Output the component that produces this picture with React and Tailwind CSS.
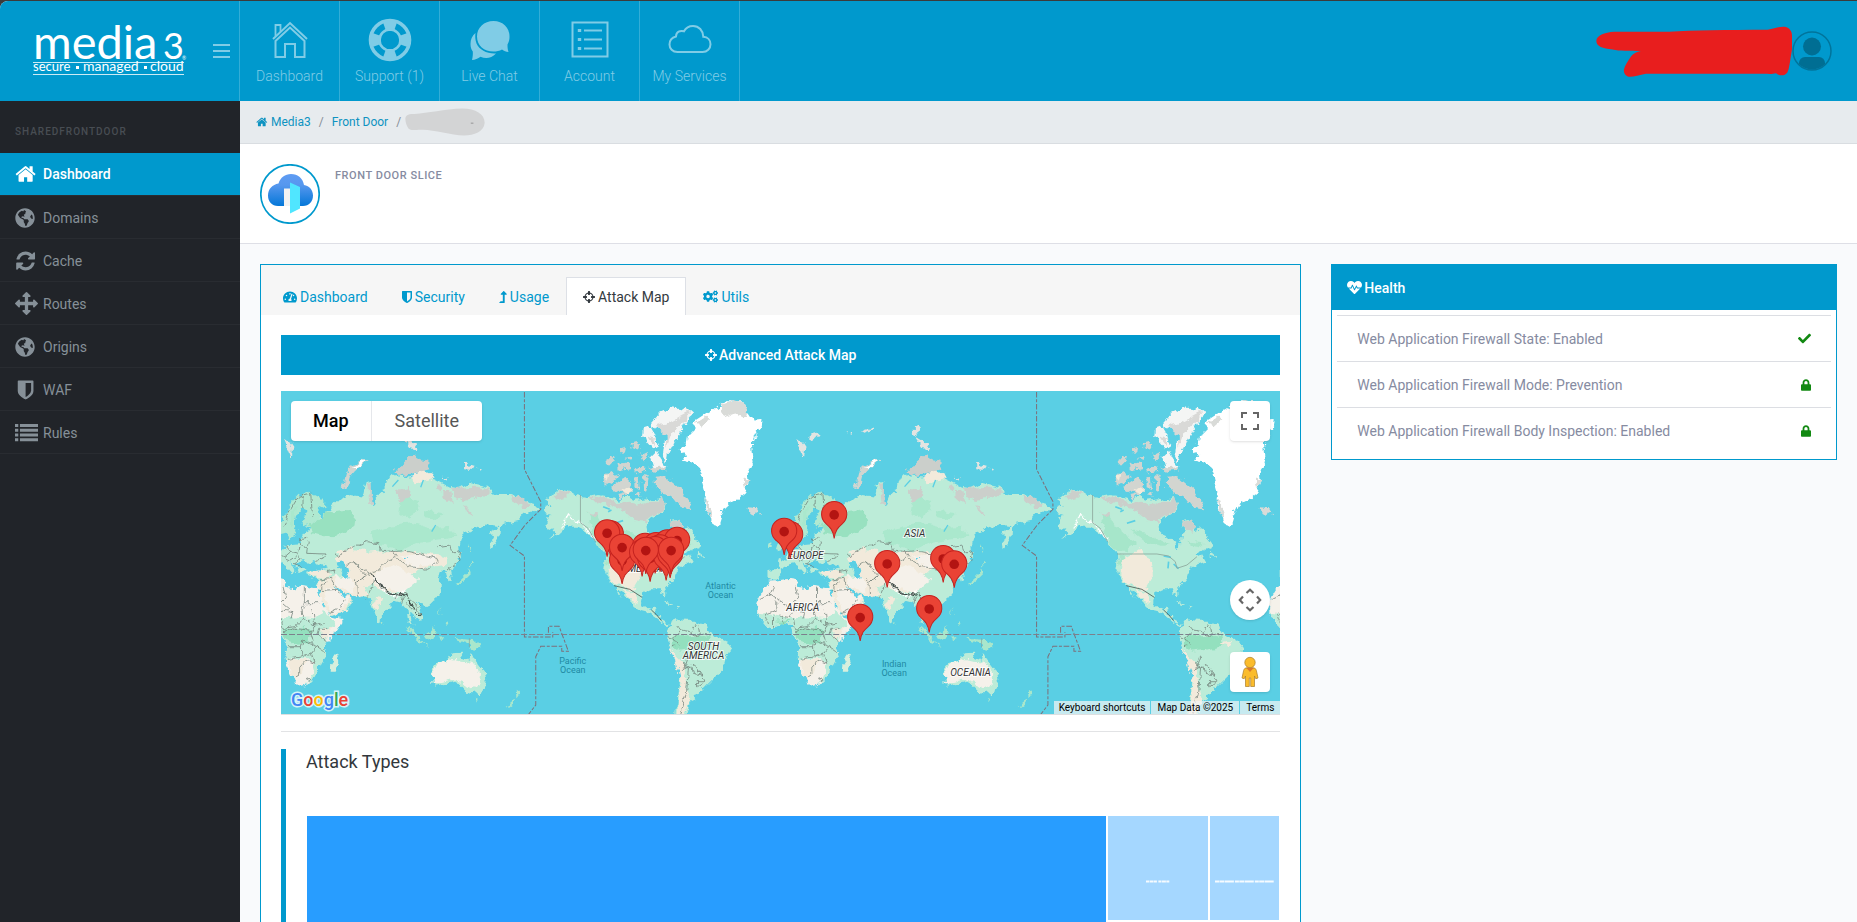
import React from "react";
import {
  FaTachometerAlt,
  FaCogs,
  FaHeartbeat,
  FaCheck,
  FaLock,
  FaLevelUpAlt,
  FaGlobeAmericas,
} from "react-icons/fa";

const GLYPHS = {
  home: "M1472 992v480q0 26-19 45t-45 19h-384v-384h-256v384h-384q-26 0-45-19t-19-45v-480q0-1 .5-3t.5-3l575-474 575 474q1 2 1 6zm223-69l-62 74q-8 9-21 11h-3q-13 0-21-7l-692-577-692 577q-12 8-24 7-13-2-21-11l-62-74q-8-10-7-23.5t11-21.5l719-599q32-26 76-26t76 26l244 204v-195q0-14 9-23t23-9h192q14 0 23 9t9 23v408l219 182q10 8 11 21.5t-7 23.5z",
  refresh:
    "M1639 1056q0 5-1 7-64 268-268 434.5t-478 166.5q-146 0-282.5-55t-243.5-157l-129 129q-19 19-45 19t-45-19-19-45v-448q0-26 19-45t45-19h448q26 0 45 19t19 45-19 45l-137 137q71 66 161 102t187 36q134 0 250-65t186-179q11-17 53-117 8-23 30-23h192q13 0 22.5 9.5t9.5 22.5zm25-800v448q0 26-19 45t-45 19h-448q-26 0-45-19t-19-45 19-45l138-138q-148-137-349-137-134 0-250 65t-186 179q-11 17-53 117-8 23-30 23h-199q-13 0-22.5-9.5t-9.5-22.5v-7q65-268 270-434.5t480-166.5q146 0 284 55.5t245 156.5l130-129q19-19 45-19t45 19 19 45z",
  arrows:
    "M1792 896q0 26-19 45l-256 256q-19 19-45 19t-45-19-19-45v-128h-384v384h128q26 0 45 19t19 45-19 45l-256 256q-19 19-45 19t-45-19l-256-256q-19-19-19-45t19-45 45-19h128v-384h-384v128q0 26-19 45t-45 19-45-19l-256-256q-19-19-19-45t19-45l256-256q19-19 45-19t45 19 19 45v128h384v-384h-128q-26 0-45-19t-19-45 19-45l256-256q19-19 45-19t45 19l256 256q19 19 19 45t-19 45-45 19h-128v384h384v-128q0-26 19-45t45-19 45 19l256 256q19 19 19 45z",
  shield:
    "M1344 960v-640h-448v1137q119-63 213-137 235-184 235-360zm192-768v768q0 86-33.5 170.5t-83 150-118 127.5-126.5 103-121 77.5-89.5 49.5-42.5 20q-12 6-26 6t-26-6q-16-7-42.5-20t-89.5-49.5-121-77.5-126.5-103-118-127.5-83-150-33.5-170.5v-768q0-26 19-45t45-19h1152q26 0 45 19t19 45z",
  list: "M0 240h256v224H0zM0 608h256v224H0zM0 976h256v224H0zM0 1344h256v224H0zM384 240h1408v224H384zM384 608h1408v224H384zM384 976h1408v224H384zM384 1344h1408v224H384z",
  crosshairs:
    "M1197 1024h-109q-26 0-45-19t-19-45v-128q0-26 19-45t45-19h109q-32-108-112.5-188.5t-188.5-112.5v109q0 26-19 45t-45 19h-128q-26 0-45-19t-19-45v-109q-108 32-188.5 112.5t-112.5 188.5h109q26 0 45 19t19 45v128q0 26-19 45t-45 19h-109q32 108 112.5 188.5t188.5 112.5v-109q0-26 19-45t45-19h128q26 0 45 19t19 45v109q108-32 188.5-112.5t112.5-188.5zm339-192v128q0 26-19 45t-45 19h-143q-37 161-154.5 278.5t-278.5 154.5v143q0 26-19 45t-45 19h-128q-26 0-45-19t-19-45v-143q-161-37-278.5-154.5t-154.5-278.5h-143q-26 0-45-19t-19-45v-128q0-26 19-45t45-19h143q37-161 154.5-278.5t278.5-154.5v-143q0-26 19-45t45-19h128q26 0 45 19t19 45v143q161 37 278.5 154.5t154.5 278.5h143q26 0 45 19t19 45z",
};

function Glyph({ name, className, box = "0 0 1792 1792" }) {
  return (
    <svg viewBox={box} className={className} fill="currentColor" aria-hidden="true">
      <path d={GLYPHS[name]} />
    </svg>
  );
}

/* ---------- header ---------- */

function Logo() {
  return (
    <svg viewBox="0 -14 156 80" className="h-20 w-39" aria-label="media3 secure managed cloud" role="img">
      <g fill="#fff" fontFamily="Lato, sans-serif">
        <text x="0" y="34" fontSize="47">media</text>
        <text x="130" y="34" fontSize="36">3</text>
        <text x="149" y="35" fontSize="5">®</text>
        <text x="0" y="46" fontSize="13">secure</text>
        <text x="50" y="46" fontSize="14">managed</text>
        <text x="117" y="46" fontSize="14">cloud</text>
        <rect x="43" y="41" width="3" height="3" />
        <rect x="111" y="41" width="3" height="3" />
      </g>
      <path d="M0 37.500H151M0 49.500H151" stroke="#fff" strokeOpacity=".8" />
    </svg>
  );
}

function HouseIcon() {
  return (
    <svg viewBox="0 0 44 44" className="size-11" fill="none" stroke="currentColor" strokeWidth="2">
      <path d="M5 21L22 5l17 16" />
      <path d="M7.500 23L22 9.500 36.500 23V39H27V26H17V39H7.500z" />
      <path d="M7.500 18V7h5v7" strokeWidth="1.800" />
    </svg>
  );
}

function RingIcon() {
  return (
    <svg viewBox="-22 -22 44 44" className="size-11" fill="none" stroke="currentColor">
      <circle r="10.500" strokeWidth="2.600" />
      <circle r="19.500" strokeWidth="3.600" />
      <g fill="currentColor" stroke="none">
        <path id="spoke" d="M-4-9L-7.500-19 0-21 7.500-19 4-9z" />
        <use href="#spoke" transform="rotate(90)" />
        <use href="#spoke" transform="rotate(180)" />
        <use href="#spoke" transform="rotate(270)" />
      </g>
    </svg>
  );
}

function ChatIcon() {
  return (
    <svg viewBox="0 0 44 44" className="size-11" fill="currentColor">
      <path d="M25.500 3C16 3 9 9.500 9 18.500S16 33.500 25.500 33.500c3 0 6-.6 8.500-2 2 1.500 4 2.500 6.500 2.500-1-3-1-5-1-7.500 1.500-2.500 2-5 2-8C41.500 9.500 35 3 25.500 3z" />
      <path d="M7.500 15C4 18 2.500 21.500 2.500 26c0 3 .8 5.500 2.300 7.500C5 36 4.800 39 4 42c3-.2 6-1.200 8.500-3.200 5.500 2.400 11 1.400 15.500-3.300-9 .5-16.500-3.500-19.500-10C7.200 22 7 18 7.500 15z" />
    </svg>
  );
}

function AccountIcon() {
  return (
    <svg viewBox="0 0 44 44" className="size-11" fill="none" stroke="currentColor">
      <rect x="4.500" y="4.500" width="35" height="34" strokeWidth="2" />
      <path d="M16 12.500h18M16 21.500h18M16 30.500h18" strokeWidth="2" />
      <path d="M11.500 11v3M11.500 20v3M11.500 29v3" strokeWidth="3.400" />
    </svg>
  );
}

function CloudIcon() {
  return (
    <svg viewBox="0 0 44 44" className="size-11" fill="none" stroke="currentColor" strokeWidth="2">
      <path d="M9.500 34C4.500 34 1.500 30.500 1.500 26.500c0-4 2.500-7 6.500-8 .2-4.500 4-6.500 8-5.200C18 9.500 21.300 8 25 8c6 0 10 4.500 10.300 10.700 4.500.3 7.200 3.600 7.200 7.500 0 4.500-3.300 7.800-8 7.800z" />
    </svg>
  );
}

const NAV = [
  ["Dashboard", HouseIcon],
  ["Support (1)", RingIcon],
  ["Live Chat", ChatIcon],
  ["Account", AccountIcon],
  ["My Services", CloudIcon],
];

function Header() {
  return (
    <header className="flex h-25 shrink-0 items-stretch bg-[#0099cd]">
      <div className="flex w-60 shrink-0 items-center justify-between border-r border-[#33add7] pr-[9px] pl-[33px]">
        <a href="#home"><Logo /></a>
        <button type="button" aria-label="Toggle menu" className="flex flex-col gap-1 text-[#80cce6]">
          <span className="block h-0.5 w-[17px] bg-current" />
          <span className="block h-0.5 w-[17px] bg-current" />
          <span className="block h-0.5 w-[17px] bg-current" />
        </button>
      </div>
      <nav className="flex">
        {NAV.map(([label, Icon]) => (
          <a
            key={label}
            href="#nav"
            className="flex w-25 flex-col items-center gap-1 border-r border-[#33add7] pt-[17px] text-sm font-light text-[#80cce6]"
          >
            <Icon />
            {label}
          </a>
        ))}
      </nav>
      <div className="ml-auto flex items-center pr-[25px]">
        <svg viewBox="110 76 588 152" className="h-[51px] w-49" aria-hidden="true">
          <path
            fill="#e81e1e"
            d="M111 120C112 104 135 95 165 93H330C400 88 500 88 625 87 645 82 660 77 675 78 690 80 698 90 698 105V145C692 180 690 205 684 215 675 227 660 225 650 217 640 220 630 219 615 219H260C240 222 225 228 212 228 198 227 192 215 194 205 197 193 205 182 215 167 224 156 232 153 245 151 210 150 180 151 160 146 130 143 111 138 111 120z"
          />
        </svg>
        <button type="button" aria-label="Profile">
          <svg viewBox="0 0 40 40" className="size-10">
            <defs>
              <clipPath id="face"><circle cx="20" cy="20" r="18.500" /></clipPath>
            </defs>
            <circle cx="20" cy="20" r="19" fill="none" stroke="#00749b" strokeWidth="1.500" />
            <g clipPath="url(#face)" fill="#006e93">
              <circle cx="20" cy="15.500" r="9" />
              <rect x="7" y="26" width="26" height="20" rx="6" />
            </g>
          </svg>
        </button>
      </div>
    </header>
  );
}

/* ---------- sidebar ---------- */

const MENU = [
  ["Dashboard", "home", "size-[22px]"],
  ["Domains", "globe", "size-5"],
  ["Cache", "refresh", "size-[22px]"],
  ["Routes", "arrows", "size-[23px]"],
  ["Origins", "globe", "size-5"],
  ["WAF", "shield", "size-[22px]"],
  ["Rules", "list", "size-[23px]"],
];

function Sidebar() {
  return (
    <aside className="w-60 shrink-0 bg-[#212429]">
      <h2 className="px-[15px] pt-[23px] pb-3.5 text-[10px] leading-[15px] font-medium tracking-widest text-[#484d53]">
        SHAREDFRONTDOOR
      </h2>
      <ul>
        {MENU.map(([label, icon, size], i) => (
          <li key={label}>
            <a
              href="#menu"
              className={
                i === 0
                  ? "flex h-[43px] items-center border-b border-[#292c31] bg-[#0099cd] pl-[15px] text-sm font-medium text-white"
                  : "flex h-[43px] items-center border-b border-[#292c31] pt-px pl-[15px] text-sm text-[#869098]"
              }
            >
              <span className="flex w-7 shrink-0">
                {icon === "globe" ? (
                  <FaGlobeAmericas className={size} />
                ) : (
                  <Glyph name={icon} className={size} box={icon === "arrows" || icon === "list" ? "0 0 1792 1792" : "128 0 1600 1792"} />
                )}
              </span>
              {label}
            </a>
          </li>
        ))}
      </ul>
    </aside>
  );
}

/* ---------- world map ---------- */
/* The three plates share one scale, 3 units to a pixel, each with its own origin. */

const OCEAN = "#5acfe4";

const AMERICA_LAND =
  "M470 385L490 380 484 370 470 360 490 345 515 328 545 335 560 345 600 352 630 345 660 350 690 362 710 350 740 360 770 355 800 362 820 350 830 375 825 395 800 410 785 420 775 440 780 462 810 475 828 485 832 505 842 500 843 480 845 465 848 445 845 425 865 420 880 435 885 450 905 445 920 470 937 492 930 505 905 512 890 520 905 528 915 545 895 553 880 560 868 570 862 590 850 605 835 622 830 635 835 648 828 650 815 628 790 628 765 640 762 665 772 685 785 690 795 680 805 682 798 698 815 705 818 720 835 730 845 733 838 738 820 728 800 712 780 698 755 692 735 680 722 660 705 640 690 622 690 632 703 658 690 642 680 618 665 605 655 590 648 570 652 545 650 525 640 505 625 490 610 465 590 450 570 440 550 440 535 435 520 452 500 470 485 478 505 460 498 452 480 445 472 430 478 415 490 405 475 400z M930 515L948 530 945 533 928 530z";
const SOUTH_AMERICA =
  "M330 740L345 718 375 722 410 722 440 738 448 762 480 775 512 790 510 810 492 840 488 870 465 890 440 915 415 940 405 955 385 965 380 990 375 1008 348 1008 350 980 358 920 362 870 355 845 335 820 318 785 320 760z";
const AMERICA_DEEP =
  "M600 400L625 405 645 440 680 465 712 485 690 500 670 515 650 515 630 490 610 455zM690 450L740 462 780 480 810 495 790 500 740 490zM865 485L910 490 895 502 868 498zM655 525L680 530 668 545 655 555z";
const AMERICA_SAND =
  "M665 540L700 520 715 508 735 530 755 545 758 590 735 630 700 620 672 608 660 585zM705 625L735 635 748 665 740 672 722 650z";
const AMERICA_TUNDRA =
  "M490 350L515 330 545 340 530 355 500 362zM600 355L650 350 680 370 720 365 750 375 775 365 805 365 822 350 830 378 815 400 790 410 770 425 740 420 715 400 690 385 640 370zM845 425L868 422 882 440 880 455 850 448zM600 395L630 400 620 415z";
const ARCTIC =
  "M645 290L670 278 690 285 675 305 650 320zM685 310L712 290 725 305 735 330 715 345 690 335 675 328zM742 292L752 290 755 330 742 325zM765 285L785 290 778 330 768 335zM800 290L830 288 850 305 880 330 905 370 912 392 880 385 850 345 820 338 800 315zM685 255L720 250 725 265 690 272zM660 235L680 230 675 250 655 250zM740 265L760 260 775 275 745 280zM780 260L830 258 835 272 800 275zM695 205L710 200 708 218 695 215zM730 190L745 185 755 205 738 210zM712 235L728 225 730 240zM755 225L775 215 780 230 765 240zM740 345L755 335 760 350zM690 345L715 340 700 355z";
const ARCTIC_WHITE =
  "M788 130L815 100 855 82 900 88 914 100 890 130 865 180 840 215 835 245 825 220 830 180 850 150 815 150 790 142zM770 145L785 140 800 165 810 195 795 208 775 185 768 165zM790 230L805 215 815 235 835 262 800 265z";
const ARCTIC_SHADE = "M800 140L850 125 905 95 895 120 850 160 835 200 832 165zM780 170L800 175 800 195z";
const GREENLAND =
  "M480 75L500 60 545 65 560 90 580 122 607 120 605 140 585 165 575 190 580 240 565 265 568 300 555 340 530 360 500 375 485 405 475 438 455 432 445 400 435 375 440 345 430 310 420 265 400 248 365 242 378 225 355 208 375 200 380 170 400 155 400 125 430 105 460 90z";
const GREENLAND_ROCK =
  "M485 72L520 60 548 68 565 95 560 115 530 100 505 110 480 95zM405 130L440 110 450 118 425 140zM435 350L445 370 455 425 442 395zM545 290L570 300 555 325z";

const RUSSIA =
  "M120 400L150 412 190 378 215 355 245 345 280 350 290 305 300 303 302 345 310 380 325 345 340 330 345 300 375 285 430 290 470 285 500 300 540 320 570 325 600 308 650 320 680 345 720 345 750 350 785 372 805 385 790 400 765 395 745 420 700 432 690 440 688 470 665 505 660 480 675 450 685 435 650 430 620 440 580 460 570 490 572 520 555 560 540 570 546 600 535 604 530 575 510 575 500 590 515 610 515 635 495 660 465 675 440 668 458 700 456 715 440 718 430 700 420 696 425 725 432 742 416 718 412 685 395 665 375 660 350 690 336 700 335 722 325 728 315 700 305 670 290 655 270 650 240 645 220 635 245 660 245 675 215 700 180 708 165 680 148 642 142 612 145 600 115 592 108 575 128 570 160 572 175 568 150 550 130 540 112 552 118 562 100 572 86 580 78 562 60 550 78 575 68 580 48 558 34 550 10 556 -10 568 -8 585 -24 600 -44 596 -44 570 -12 566 -12 545 8 532 30 518 44 505 66 492 90 490 98 468 118 455 125 440 112 440 108 420z";
const SCANDINAVIA =
  "M30 460L28 430 45 405 62 370 85 345 115 335 148 352 172 378 160 385 140 380 148 405 130 440 98 440 92 415 105 395 95 385 80 410 78 435 84 455 70 470 55 480 48 455zM-16 440L0 455 10 480 14 500 -14 508 -8 490 -18 465zM-42 488L-30 482 -28 500 -42 505z";
const DEEP_FOREST_PALE =
  "M300 460L360 440 420 430 480 445 540 440 560 470 500 480 440 490 400 510 350 500 310 490zM60 400L80 380 75 430 60 440zM400 345L450 365 435 400 420 420 390 400zM460 390L520 400 500 420 465 415z";
const DEEP_FOREST = "M120 440L170 395 220 390 255 400 250 440 215 465 170 470 130 460z";
const EURASIA_SAND =
  "M195 520L240 505 280 512 320 510 350 520 380 515 430 512 480 520 530 530 525 555 490 560 440 572 420 600 380 640 340 635 310 610 280 625 300 645 270 655 230 640 245 665 215 700 180 706 165 680 146 642 146 605 190 590 230 590 215 560 200 540zM115 575L150 568 185 580 170 596 120 592zM315 645L340 650 325 690 312 680zM420 290L460 270 500 290 480 300 440 310z";
const EURASIA_DESERT =
  "M385 530L440 515 500 530 495 555 430 560zM320 575L370 555 420 580 445 600 400 635 350 628 310 600zM165 630L200 625 240 660 210 695 180 700zM190 585L245 590 250 640 200 620z";
const EURASIA_TUNDRA =
  "M365 275L400 255 430 225 450 238 478 242 478 268 440 278 400 285zM290 310L302 305 302 345 312 372 300 375zM375 330L420 320 415 355 395 365zM545 325L620 320 660 330 640 350 580 360 550 350zM720 350L755 352 785 378 760 378 725 365zM520 330L540 330 545 370 520 350zM580 370L605 400 600 410zM500 310L520 320 510 335z";
const NOVAYA = "M230 320L218 325 228 285 245 255 282 236 288 242 255 270 238 290z";
const SVALBARD =
  "M42 178L60 185 70 200 65 235 55 210zM72 172L100 160 110 168 95 185 80 180zM195 158L215 150 208 158zM230 155L270 145 272 150 245 160z M395 140L410 145 405 165 395 160zM398 170L415 180 440 195 430 212 415 195zM585 250L612 258 605 270 585 268zM620 262L635 268 632 272zM520 290L532 292 530 302z";
const ISLANDS =
  "M598 490L605 525 606 500zM600 558L605 580 590 595 575 608 552 610 575 598 590 582zM600 545L612 550 600 558zM508 685L515 705 508 702zM528 722L534 738 524 735zM412 738L430 755 450 780 478 797 450 790 425 765zM462 765L485 752 498 738 492 765 482 782 465 775zM555 770L580 778 610 780 635 800 618 806 590 792 565 785zM505 770L520 768 512 780zM335 725L341 732 336 736z M740 932L753 942 742 958zM738 955L722 978 710 986 718 970zM614 955L628 956 621 968z";
const AUSTRALIA =
  "M482 870L500 850 530 840 545 820 575 818 580 835 600 842 605 818 615 840 645 880 650 905 635 935 600 940 580 920 555 905 520 915 490 920 490 895z";
const AUSTRALIA_SAND =
  "M486 872L510 850 540 838 570 845 610 848 630 880 628 915 605 925 580 910 550 898 510 908 492 912z";
const SEAS =
  "M72 555L95 540 130 555 118 568 85 562zM200 545L222 540 232 575 245 590 228 596 212 570zM95 385L110 392 92 420 98 440 118 432 95 450 84 462 78 438 82 410zM190 618L215 638 238 648 222 650 200 635zM400 540L412 535 408 530z";

const AFRICA =
  "M628 602L690 597 708 600 710 620 740 625 750 615 775 620 805 625 812 640 830 680 850 710 880 718 880 730 860 760 835 790 830 815 832 835 805 865 795 890 775 915 745 920 735 890 715 850 713 825 720 800 705 775 700 755 695 735 670 730 640 742 620 738 600 715 590 695 592 665 605 640 620 615z";
const AFRICA_GREEN =
  "M592 698L640 705 700 715 760 712 800 715 825 690 850 715 862 740 845 745 835 790 830 815 832 835 805 850 780 838 715 838 713 825 720 800 705 775 700 755 695 735 670 730 640 742 620 738 600 715z";
const AFRICA_DEEP = "M705 745L770 740 795 760 780 785 735 790 712 775zM645 725L690 722 670 735z";
const AFRICA_BORDERS =
  "M628 640L700 690M640 615L632 640 600 655M708 620L715 650 700 665 735 695M769 620L769 668 812 668M769 668L762 690 765 712M650 665L650 690 620 700M700 690L690 712 655 708M700 690L735 695 730 715M612 700L625 735M640 710L640 740M665 710L670 730M700 715L705 745 740 740 765 715 800 735 830 730M795 690L800 735 790 760 795 785M835 745L815 745 810 765 835 785M705 755L740 745 780 750 790 770M720 800L760 800 765 780 790 790M760 800L762 830 720 838M762 830L790 820 808 800M790 820L800 850 775 840 755 862 755 885 738 890M780 790L808 800 830 815M775 890L788 898 782 904z";
const SAMERICA_BORDERS =
  "M350 735L362 750 340 775 325 770M362 750L395 755 405 735M395 755L400 768 440 760M415 740L418 760M340 775L352 795 335 800M385 830L375 860 395 862 400 880 425 885 435 905 410 905M395 862L372 850M425 885L412 865 398 855M362 870L385 862 380 930 362 1003M412 905L412 920 435 905";
const EURASIA_BORDERS =
  "M45 440L55 400 78 362 100 345 122 340 128 410M100 345L98 390M112 475L90 480 92 495 112 500 115 485M112 500L110 520 165 522 160 535 135 545M50 500L62 515 45 530M62 515L85 520 90 500M35 530L60 540 85 525 90 540 70 550 95 560M195 520L200 530 250 500 290 485 325 492 330 510 370 515 380 530 350 545 320 575 295 580 250 545 235 550M370 515L400 512 440 520 500 535 505 545 470 568 420 560 380 535M505 500L540 495 545 520 572 515 565 545 530 570M235 550L225 560M250 545L290 590 260 605 250 595M310 590L330 620 350 635 380 645 372 660M380 645L405 640 412 650 430 665 445 680M400 650L395 670M412 670L425 690 440 690M440 680L452 705M310 600L305 620 290 655M260 605L262 645M260 605L300 585M150 600L185 595 195 620 215 640M165 605L150 632 200 628M180 700L210 685 225 660M170 575L195 570 190 580";
const AMERICA_BORDERS = "M577 345V428M577 428L600 445 622 485M650 522H770L805 528 825 545 830 565 860 555 890 530";

const DATELINE = "M763 0V268L812 365V388L765 435 720 496 763 528V771H848V756M835 758V739H867L895 814H875V799H812L797 830V975L770 1010";

function World({ shift }) {
  return (
    <g transform={`translate(${shift} -11)`}>
      <g transform="translate(107 0) scale(.33333)">
        <g filter="url(#coast)">
          <path d={AMERICA_LAND} fill="#bcecd8" />
          <path d={AMERICA_DEEP} fill="#a6e6ca" />
          <path d={AMERICA_SAND} fill="#f2eadb" />
          <path d={AMERICA_TUNDRA} fill="#cbcfcb" />
          <path d={ARCTIC} fill="#d2d5d0" />
          <path d={ARCTIC_WHITE} fill="#f4f5f4" />
          <path d={ARCTIC_SHADE} fill="#d9d9d7" />
          <path d="M718 318L735 330 715 342 700 332zM645 292L660 285 655 305z" fill="#f2eadb" />
          <path d="M825 664L850 672 855 678 835 672zM862 680L880 682 872 686z" fill="#bcecd8" />
        </g>
        <path
          d="M520 445L540 405 555 420 580 430 605 455 620 480"
          fill="none"
          stroke="#fff"
          strokeWidth="5"
          strokeDasharray="7 3 10 2"
          filter="url(#jitter)"
        />
        <path d="M645 380l20 8M680 430l25-8M660 395l10-5M805 545l-2 20M790 528l22 4M820 552l15 14" stroke={OCEAN} strokeWidth="5" fill="none" />
        <path d={AMERICA_BORDERS} fill="none" stroke="#8ca69b" strokeWidth="2.500" />
        <path d="M678 617L725 628 762 652M790 690l15 14 15 18" fill="none" stroke="#4b5752" strokeWidth="2.500" />
      </g>
      <g transform="translate(501 0) scale(.33333)">
        <g filter="url(#coast)">
          <path d={RUSSIA} fill="#bcecd8" />
          <path d={SCANDINAVIA} fill="#b0e9d1" />
          <path d={DEEP_FOREST_PALE} fill="#aae8cd" />
          <path d={DEEP_FOREST} fill="#98e1c0" />
          <path d={EURASIA_SAND} fill="#f2eadb" />
          <path d={EURASIA_DESERT} fill="#f5f1ea" />
          <path d={EURASIA_TUNDRA} fill="#cbcfcb" />
          <path d={NOVAYA} fill="#d2d5d0" />
          <path d="M245 262L282 238 286 242 258 264z" fill="#fff" />
          <path d={SVALBARD} fill="#e3e4e1" />
          <path d={ISLANDS} fill="#a9e7cc" />
          <path d={AUSTRALIA} fill="#bcecd8" />
          <path d={AUSTRALIA_SAND} fill="#f5f1ea" />
          <path d={SEAS} fill={OCEAN} />
        </g>
        <path d="M330 620L350 637 378 650 405 632" fill="none" stroke="#fff" strokeWidth="9" strokeDasharray="5 3" />
        <path d="M485 455l12-20M460 300l-8 22M385 300l-18 20" stroke={OCEAN} strokeWidth="4" />
        <path d={EURASIA_BORDERS} fill="none" stroke="#6f7d76" strokeWidth="2.200" filter="url(#jitter)" />
        <path d="M300 575l20 30 40 33 25 5M390 640l20 10 15 25M425 670l15 30 12 8" fill="none" stroke="#38433f" strokeWidth="3" filter="url(#jitter)" />
        <path d="M598 775v26" stroke="#8aa398" strokeWidth="2" />
      </g>
      <g transform="translate(279 0) scale(.33333)">
        <g filter="url(#coast)">
          <path d={AFRICA} fill="#f5f1ea" />
          <path d={AFRICA_GREEN} fill="#bcecd8" />
          <path d={AFRICA_DEEP} fill="#93e0be" />
          <path d="M720 840L775 840 760 885 735 890z" fill="#f2eadb" />
          <path d="M800 850L830 835 800 890 775 912 790 880z" fill="#bcecd8" />
          <path d="M820 745L850 745 835 780 820 770z" fill="#f2eadb" />
          <path d="M870 820L875 835 860 875 848 875 850 850z" fill="#d7efdd" />
          <path d={SOUTH_AMERICA} fill="#bcecd8" />
          <path d="M335 770L400 765 450 772 455 795 400 810 360 815 335 795z" fill="#93e0be" />
          <path d="M322 800L345 825 366 845 376 900 385 960 372 1005 352 1005 362 900 350 850zM440 790L480 785 470 800z" fill="#f2eadb" />
          <path d={GREENLAND} fill="#fff" />
          <path d={GREENLAND_ROCK} fill="#d9dbd8" />
          <path d="M565 385L595 388 600 400 580 410 568 402z" fill="#d9dbd8" />
        </g>
        <path d={AFRICA_BORDERS} fill="none" stroke="#6f7d76" strokeWidth="2.200" filter="url(#jitter)" />
        <path d={SAMERICA_BORDERS} fill="none" stroke="#6f7d76" strokeWidth="2.200" filter="url(#jitter)" />
      </g>
      <path d={DATELINE} transform="translate(-11 0) scale(.33333)" fill="none" stroke="#7d6f79" strokeWidth="3" strokeDasharray="17 5 9 5" />
    </g>
  );
}

const PINS = [
  [152, 533], [141, 530], [186, 612], [186, 573], [255, 570], [246, 589], [288, 568],
  [322, 560], [351, 552], [300, 575], [285, 580], [270, 605], [318, 601], [330, 594],
  [257, 582], [333, 582], [690, 535], [672, 525], [822, 475], [900, 783], [981, 622],
  [1149, 607], [1182, 623], [1107, 757],
];

const PLACES = [
  [246, 576, "AMERICA"], [1064, 470, "ASIA"], [736, 536, "EUROPE"], [728, 692, "AFRICA"],
  [430, 809, "SOUTH"], [430, 836, "AMERICA"], [1231, 887, "OCEANIA"],
];

const OCEANS = [
  [481, 627, "Atlantic"], [481, 653, "Ocean"], [38, 851, "Pacific"], [38, 878, "Ocean"],
  [1002, 860, "Indian"], [1002, 887, "Ocean"],
];

const at = (x, y) => [279 + x / 3, y / 3 - 11];

function WorldMap() {
  return (
    <svg viewBox="0 0 999 323" preserveAspectRatio="xMidYMid slice" className="block h-full w-full" fontFamily="Roboto, sans-serif">
      <defs>
        <filter id="coast" x="-5%" y="-5%" width="110%" height="110%">
          <feTurbulence type="fractalNoise" baseFrequency=".045" numOctaves="3" seed="4" result="n" />
          <feDisplacementMap in="SourceGraphic" in2="n" scale="26" xChannelSelector="R" yChannelSelector="G" />
        </filter>
        <filter id="jitter" x="-5%" y="-5%" width="110%" height="110%">
          <feTurbulence type="fractalNoise" baseFrequency=".06" numOctaves="2" seed="9" result="n" />
          <feDisplacementMap in="SourceGraphic" in2="n" scale="18" xChannelSelector="R" yChannelSelector="G" />
        </filter>
      </defs>
      <rect x="-600" width="2200" height="323" fill={OCEAN} />
      <World shift={-512} />
      <World shift={0} />
      <World shift={512} />
      <path d="M0 243.500H999" stroke="#7d7f8c" strokeDasharray="6 2" />
      <g fontSize="10" textAnchor="middle">
        {OCEANS.map(([x, y, t]) => (
          <text key={x + t} x={at(x, y)[0]} y={at(x, y)[1]} fontSize="9" fill="#1f8aa3">{t}</text>
        ))}
        {PLACES.map(([x, y, t]) => (
          <text key={x + t} x={at(x, y)[0]} y={at(x, y)[1]} fontStyle="italic" fill="#333" stroke="#fff" strokeWidth="2" strokeOpacity=".8" paintOrder="stroke">{t}</text>
        ))}
      </g>
      {PINS.map(([x, y]) => (
        <g key={`${x}-${y}`} transform={`translate(${at(x, y)[0]} ${at(x, y)[1]})`}>
          <path d="M0 0C-1-8-4-11-8-14.500A12.600 12.600 0 1 1 8-14.500C4-11 1-8 0 0z" fill="#ea4335" stroke="#c5221f" strokeWidth="1" />
          <circle cy="-23.400" r="4.800" fill="#b31412" />
        </g>
      ))}
      <text x="10" y="315" fontSize="18" fontWeight="500" stroke="#fff" strokeWidth="3" strokeOpacity=".75" paintOrder="stroke">
        <tspan fill="#4285f4">G</tspan>
        <tspan fill="#ea4335">o</tspan>
        <tspan fill="#fbbc04">o</tspan>
        <tspan fill="#4285f4">g</tspan>
        <tspan fill="#34a853">l</tspan>
        <tspan fill="#ea4335">e</tspan>
      </text>
    </svg>
  );
}

function MapPanel() {
  return (
    <div className="relative mt-4 h-[324px] overflow-hidden border-b border-[#dedfe0] bg-[#5acfe4]">
      <WorldMap />
      <div className="absolute top-[10px] left-[10px] flex h-10 rounded-sm bg-white text-lg shadow">
        <button type="button" className="border-r border-gray-200 px-[22px] font-medium text-black">Map</button>
        <button type="button" className="px-[23px] text-[#565656]">Satellite</button>
      </div>
      <div className="absolute inset-y-[10px] right-[10px] flex w-10 flex-col pb-3">
        <button type="button" aria-label="Full screen" className="flex size-10 items-center justify-center rounded-sm bg-white shadow">
          <svg viewBox="0 0 18 18" className="size-[18px]" fill="#666">
            <path d="M0 0v6h2V2h4V0zM16 0h-4v2h4v4h2V0zM16 16h-4v2h6v-6h-2zM2 12H0v6h6v-2H2z" />
          </svg>
        </button>
        <button type="button" aria-label="Map camera controls" className="mt-auto mb-8 flex size-10 items-center justify-center rounded-full bg-white shadow">
          <svg viewBox="0 0 24 24" className="size-6" fill="none" stroke="#666" strokeWidth="2.200">
            <path d="M8.500 5L12 1.800 15.500 5M8.500 19L12 22.200 15.500 19M5 8.500L1.800 12 5 15.500M19 8.500L22.200 12 19 15.500" />
          </svg>
        </button>
        <button type="button" aria-label="Street View" className="flex size-10 items-center justify-center rounded-sm bg-white shadow">
          <svg viewBox="0 0 20 32" className="h-8 w-5">
            <path d="M6 12h8c1.500 0 2.300 1.500 2.700 4l1.300 6-2.200.8L14.500 20V30.500H10.700V22H9.300v8.500H5.500V20l-1.300 2.800L2 22l1.300-6C3.700 13.500 4.500 12 6 12z" fill="#fbbc2c" stroke="#a77d2c" strokeWidth=".7" />
            <path d="M6 11.500h8L10 16z" fill="#d9782d" />
            <circle cx="10" cy="6.500" r="5.200" fill="#fbbc2c" stroke="#a77d2c" strokeWidth=".7" />
          </svg>
        </button>
      </div>
      <div className="absolute right-0 bottom-0 flex h-[13px] gap-px text-[10px] leading-[13px] text-black">
        <button type="button" className="bg-[#f5f5f5]/70 px-[5px]">Keyboard shortcuts</button>
        <span className="bg-[#f5f5f5]/70 px-[6px]">Map Data ©2025</span>
        <a href="#terms" className="bg-[#f5f5f5]/70 px-[6px]">Terms</a>
      </div>
    </div>
  );
}

/* ---------- content ---------- */

const TABS = [
  ["Dashboard", <FaTachometerAlt className="size-[14px]" />],
  ["Security", <Glyph name="shield" className="h-[14px] w-[10px]" box="256 0 1280 1792" />],
  ["Usage", <FaLevelUpAlt className="h-3 w-2" />],
  ["Attack Map", <Glyph name="crosshairs" className="h-[14px] w-3" box="0 128 1536 1536" />],
  ["Utils", <FaCogs className="size-[15px]" />],
];

function AttackCard() {
  return (
    <section className="border border-[#0099cd] bg-white">
      <div role="tablist" className="flex items-end bg-[#f6f6f6] px-[5px] pt-3 text-sm">
        {TABS.map(([label, icon]) => (
          <button
            type="button"
            role="tab"
            key={label}
            aria-selected={label === "Attack Map"}
            className={
              label === "Attack Map"
                ? "flex h-[38px] items-center gap-[3px] border border-b-0 border-[#dde0e6] bg-white px-4 text-[#343a40]"
                : "flex h-[38px] items-center gap-[3px] border border-b-0 border-transparent px-4 text-[#0099cd]"
            }
          >
            {icon}
            {label}
          </button>
        ))}
      </div>
      <div className="px-5 pt-5">
        <a href="#advanced" className="flex h-10 items-center justify-center gap-0.5 bg-[#0099cd] text-sm font-medium text-white">
          <Glyph name="crosshairs" className="size-3" box="0 128 1536 1536" />
          Advanced Attack Map
        </a>
        <MapPanel />
        <hr className="my-4 border-[#e2e3e5]" />
        <div className="mt-[17px] border-l-[5px] border-[#0099cd] pl-5">
          <h3 className="text-lg leading-[26px] text-[#32373c]">Attack Types</h3>
          <div className="mt-[41px] flex h-80 gap-0.5 px-px">
            <div className="flex-[800] bg-[#289dff]" />
            <div className="flex h-[104px] flex-[100] items-center justify-center bg-[#a5d7ff] pt-[26px]">
              <svg viewBox="0 0 24 3" className="h-[3px] w-6">
                <path d="M0 1.500H24" stroke="#fff" strokeWidth="2" strokeOpacity=".9" strokeDasharray="3 .5 4 .4 3 1.500" />
              </svg>
            </div>
            <div className="flex h-[104px] flex-[69] items-center justify-center bg-[#a5d7ff] pt-[26px]">
              <svg viewBox="0 0 59 3" className="h-[3px] w-[59px]">
                <path d="M0 1.500H59" stroke="#fff" strokeWidth="2" strokeOpacity=".9" strokeDasharray="4 .4 5 .5 9 1" />
              </svg>
            </div>
          </div>
        </div>
      </div>
    </section>
  );
}

const CHECKS = [
  ["Web Application Firewall State: Enabled", <FaCheck className="size-[13px]" />],
  ["Web Application Firewall Mode: Prevention", <FaLock className="h-3 w-2.5" />],
  ["Web Application Firewall Body Inspection: Enabled", <FaLock className="h-3 w-2.5" />],
];

function HealthCard() {
  return (
    <section className="border border-[#0099cd] bg-white">
      <h2 className="flex h-[45px] items-center gap-0.5 bg-[#0099cd] px-[15px] text-sm font-medium text-white">
        <FaHeartbeat className="size-[15px]" />
        Health
      </h2>
      <ul className="p-[5px] pb-[6px]">
        {CHECKS.map(([label, icon]) => (
          <li key={label} className="flex h-[46px] items-center justify-between border-t border-[#dcdee3] px-5 text-sm text-[#868ba1]">
            {label}
            <span className="text-[#128912]">{icon}</span>
          </li>
        ))}
      </ul>
    </section>
  );
}

function FrontDoorIcon() {
  return (
    <svg viewBox="0 0 60 60" className="size-[60px] shrink-0">
      <defs>
        <linearGradient id="sky" x1="0" y1="0" x2="0" y2="1">
          <stop offset="0" stopColor="#5f9cf3" />
          <stop offset=".35" stopColor="#5697ee" />
          <stop offset="1" stopColor="#0477d8" />
        </linearGradient>
      </defs>
      <circle cx="30" cy="30" r="29.200" fill="#fff" stroke="#0099cd" strokeWidth="1.700" />
      <path d="M18 42C12 42 8 37.500 8 31.500 8 25 12.500 20.500 18.500 19.500 20.500 13.500 25 10 31 10c7 0 12 4.500 13 11 5.500 1 9 5 9 10.500C53 37.500 49 42 43 42z" fill="url(#sky)" />
      <path d="M24 24.500h6V42h-6z" fill="#f2f2f2" />
      <path d="M30 18.500l10 4.500v21.500l-10 5z" fill="#50e6ff" />
    </svg>
  );
}

export default function App() {
  return (
    <div className="h-screen overflow-hidden bg-[#3b3b3b] pt-px font-[Roboto,sans-serif]">
      <div className="flex h-full flex-col overflow-hidden rounded-tl-lg bg-[#f9fafc]">
        <Header />
        <div className="flex min-h-0 flex-1">
          <Sidebar />
          <main className="min-w-0 flex-1 overflow-hidden">
            <nav aria-label="Breadcrumb" className="flex h-[43px] items-center border-b border-[#d9dde1] bg-[#e7ebee] px-4 text-xs text-[#0e93c1]">
              <a href="#root" className="flex items-center gap-[3px]">
                <Glyph name="home" className="size-3" box="128 0 1600 1792" />
                Media3
              </a>
              <span className="px-2 text-[#868e96]">/</span>
              <a href="#front-door">Front Door</a>
              <span className="pr-1 pl-2 text-[#868e96]">/</span>
              <svg viewBox="221 320 242 83" className="h-7 w-20" aria-hidden="true">
                <path d="M222 350C224 338 235 337 250 337 290 336 340 322 395 321 435 321 462 338 462 364 460 392 430 402 400 402 360 402 310 385 275 385 255 384 240 389 232 382 226 374 222 362 222 350z" fill="#d3d4d5" />
                <path d="M420 365h8" stroke="#888" strokeWidth="2.500" />
              </svg>
            </nav>
            <div className="flex h-[100px] gap-[15px] border-b border-[#dedfe6] bg-white px-5 pt-5">
              <FrontDoorIcon />
              <h1 className="pt-1 text-[11px] leading-[15px] font-medium tracking-wider text-[#868ba1]">FRONT DOOR SLICE</h1>
            </div>
            <div className="flex items-start px-[5px] pt-5">
              <div className="w-2/3 px-[15px]"><AttackCard /></div>
              <div className="w-1/3 px-[15px]"><HealthCard /></div>
            </div>
          </main>
        </div>
      </div>
    </div>
  );
}
